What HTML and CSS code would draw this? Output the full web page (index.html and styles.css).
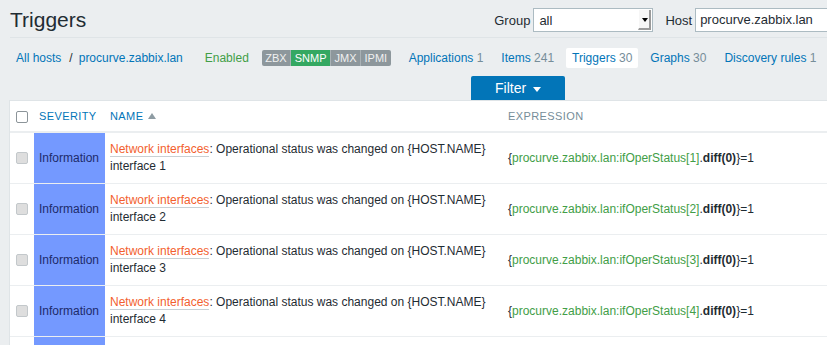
FILE: index.html
```html
<!DOCTYPE html>
<html lang="en">
<head>
    <meta charset="UTF-8">
    <title>Triggers</title>
    <link rel="stylesheet" href="styles.css">
</head>
<body>
    <div class="page">
        <header class="header">
            <h1 class="title">Triggers</h1>
            <form class="header-filter">
                <label class="field-label">Group</label>
                <div class="select">
                    <span class="select-value">all</span>
                    <span class="select-arrow"></span>
                </div>
                <label class="field-label host-label">Host</label>
                <div class="text-input">procurve.zabbix.lan</div>
            </form>
        </header>

        <nav class="host-nav">
            <a class="crumb crumb-first" href="#">All hosts</a>
            <span class="crumb-sep">/</span>
            <a class="crumb" href="#">procurve.zabbix.lan</a>
            <span class="status-enabled">Enabled</span>
            <span class="badges">
                <span class="badge">ZBX</span>
                <span class="badge badge-green">SNMP</span>
                <span class="badge">JMX</span>
                <span class="badge">IPMI</span>
            </span>
            <a class="tab tab-first" href="#">Applications <span class="count">1</span></a>
            <a class="tab" href="#">Items <span class="count">241</span></a>
            <a class="tab tab-active" href="#">Triggers <span class="count">30</span></a>
            <a class="tab" href="#">Graphs <span class="count">30</span></a>
            <a class="tab" href="#">Discovery rules <span class="count">1</span></a>
        </nav>

        <div class="filter-bar">
            <button class="filter-toggle" type="button">Filter <span class="caret"></span></button>
        </div>

        <div class="list">
            <table class="list-table">
                <colgroup>
                    <col class="col-check">
                    <col class="col-severity">
                    <col class="col-name">
                    <col>
                </colgroup>
                <thead>
                    <tr>
                        <th class="cell-check"><input type="checkbox" class="check check-head"></th>
                        <th><a href="#" class="sort-link">Severity</a></th>
                        <th><a href="#" class="sort-link">Name</a><span class="sort-arrow"></span></th>
                        <th class="plain-head">Expression</th>
                    </tr>
                </thead>
                <tbody>
                    <tr>
                        <td class="cell-check"><input type="checkbox" class="check"></td>
                        <td class="severity-info">Information</td>
                        <td><a href="#" class="app-link">Network interfaces</a>: Operational status was changed on {HOST.NAME} interface 1</td>
                        <td class="expression">{<span class="expr-key">procurve.zabbix.lan:ifOperStatus[1]</span>.<b>diff(0)</b>}=1</td>
                    </tr>
                    <tr>
                        <td class="cell-check"><input type="checkbox" class="check"></td>
                        <td class="severity-info">Information</td>
                        <td><a href="#" class="app-link">Network interfaces</a>: Operational status was changed on {HOST.NAME} interface 2</td>
                        <td class="expression">{<span class="expr-key">procurve.zabbix.lan:ifOperStatus[2]</span>.<b>diff(0)</b>}=1</td>
                    </tr>
                    <tr>
                        <td class="cell-check"><input type="checkbox" class="check"></td>
                        <td class="severity-info">Information</td>
                        <td><a href="#" class="app-link">Network interfaces</a>: Operational status was changed on {HOST.NAME} interface 3</td>
                        <td class="expression">{<span class="expr-key">procurve.zabbix.lan:ifOperStatus[3]</span>.<b>diff(0)</b>}=1</td>
                    </tr>
                    <tr>
                        <td class="cell-check"><input type="checkbox" class="check"></td>
                        <td class="severity-info">Information</td>
                        <td><a href="#" class="app-link">Network interfaces</a>: Operational status was changed on {HOST.NAME} interface 4</td>
                        <td class="expression">{<span class="expr-key">procurve.zabbix.lan:ifOperStatus[4]</span>.<b>diff(0)</b>}=1</td>
                    </tr>
                    <tr>
                        <td class="cell-check"><input type="checkbox" class="check"></td>
                        <td class="severity-info">Information</td>
                        <td><a href="#" class="app-link">Network interfaces</a>: Operational status was changed on {HOST.NAME} interface 5</td>
                        <td class="expression">{<span class="expr-key">procurve.zabbix.lan:ifOperStatus[5]</span>.<b>diff(0)</b>}=1</td>
                    </tr>
                </tbody>
            </table>
        </div>
    </div>
</body>
</html>
```

FILE: styles.css
```css
:root {
    --bg: #ebeef0;
    --line: #dfe4e7;
    --text: #1f2c33;
    --link: #0275b8;
    --muted: #768d99;
    --green: #429e47;
    --info: #7499ff;
}

* {
    box-sizing: border-box;
}

html, body {
    margin: 0;
    padding: 0;
    overflow: hidden;
}

body {
    background-color: var(--bg);
    color: var(--text);
    font-family: "Liberation Sans", Arial, sans-serif;
    font-size: 12px;
}

a {
    color: var(--link);
    text-decoration: none;
}

.page {
    width: 1100px;
    padding-left: 10px;
}

/* Header */

.header {
    display: flex;
    align-items: flex-start;
    height: 38px;
    border-bottom: 1px solid var(--line);
}

.title {
    margin: 8px 0 0 0;
    font-size: 21px;
    line-height: 24px;
    font-weight: normal;
    color: var(--text);
}

.header-filter {
    display: flex;
    align-items: center;
    margin: 8px 0 0 408px;
}

.field-label {
    margin-right: 3px;
    font-size: 13px;
}

.host-label {
    margin-left: 12px;
}

.select {
    display: flex;
    align-items: center;
    width: 120px;
    height: 24px;
    background: #fff;
    border: 1px solid #acbbc2;
    padding: 0 1px 0 5px;
}

.select-value {
    flex: 1;
    font-size: 13px;
}

.select-arrow {
    position: relative;
    width: 13px;
    height: 20px;
    background: #f6f6f6;
    border-right: 2px solid #9a9a9a;
    border-bottom: 2px solid #9a9a9a;
    border-left: 1px solid #fff;
}

.select-arrow::after {
    content: "";
    position: absolute;
    left: 3px;
    top: 8px;
    border-left: 3px solid transparent;
    border-right: 3px solid transparent;
    border-top: 4px solid #000;
}

.text-input {
    width: 160px;
    height: 24px;
    line-height: 22px;
    background: #fff;
    border: 1px solid #acbbc2;
    padding: 0 4px;
    font-size: 13px;
}

/* Host navigation */

.host-nav {
    display: flex;
    align-items: center;
    height: 32px;
    padding-top: 7px;
}

.crumb-first {
    margin-left: 6px;
}

.crumb-sep {
    margin: 0 6px 0 8px;
    color: var(--text);
}

.status-enabled {
    margin-left: 22px;
    color: var(--green);
}

.badges {
    display: flex;
    margin-left: 13px;
    border-radius: 2px;
    overflow: hidden;
}

.badge {
    height: 16px;
    line-height: 16px;
    padding: 0 3.5px;
    font-size: 11px;
    color: #f0f0f0;
    background-color: #8d979c;
}

.badge + .badge {
    border-left: 1px solid #a9b1b5;
}

.badge-green {
    background-color: #34a862;
    color: #fff;
}

.tab {
    padding: 3px 6px;
    margin-left: 6px;
    line-height: 14px;
}

.tab-first {
    margin-left: 12px;
}

.tab-active {
    background: #fff;
    border-radius: 2px;
}

.count {
    color: var(--muted);
}

/* Filter toggle */

.filter-bar {
    display: flex;
    padding: 6px 0 0 461px;
}

.filter-toggle {
    width: 94px;
    height: 24px;
    border: none;
    border-radius: 2px 2px 0 0;
    background-color: var(--link);
    color: #fff;
    font-family: inherit;
    font-size: 14px;
    padding: 0;
    cursor: pointer;
}

.caret {
    display: inline-block;
    margin-left: 3px;
    vertical-align: middle;
    border-left: 4px solid transparent;
    border-right: 4px solid transparent;
    border-top: 5px solid #fff;
}

/* Trigger list */

.list {
    margin-left: -1px;
    background: #fff;
    border: 1px solid var(--line);
}

.list-table {
    width: 100%;
    border-collapse: collapse;
    table-layout: fixed;
}

.col-check {
    width: 24px;
}

.col-severity {
    width: 71px;
}

.col-name {
    width: 398px;
}

.list-table th {
    padding: 7px 5px;
    line-height: 16px;
    text-align: left;
    font-weight: normal;
    font-size: 11px;
    letter-spacing: 0.4px;
    text-transform: uppercase;
    border-bottom: 2px solid var(--bg);
}

.plain-head {
    color: var(--muted);
}

.sort-arrow {
    display: inline-block;
    margin-left: 5px;
    vertical-align: 1px;
    border-left: 4px solid transparent;
    border-right: 4px solid transparent;
    border-bottom: 6px solid #8e9ca3;
}

.list-table td {
    padding: 8px 5px;
    line-height: 17px;
    vertical-align: middle;
    border-bottom: 1px solid var(--bg);
}

.list-table .cell-check {
    padding: 0 0 0 6px;
}

.check {
    appearance: none;
    display: block;
    width: 12px;
    height: 12px;
    margin: 0;
    border: 1px solid #c3c8cb;
    border-radius: 2px;
    background: #dedede;
}

.check-head {
    margin-top: 2px;
    border-color: #8c9499;
    background: #fff;
}

.severity-info {
    background-color: var(--info);
    color: #1d2b6b;
    white-space: nowrap;
}

.app-link {
    color: #f35f2f;
    border-bottom: 1px solid #c9d0d4;
}

.expression {
    white-space: nowrap;
}

.expr-key {
    color: var(--green);
}
```
